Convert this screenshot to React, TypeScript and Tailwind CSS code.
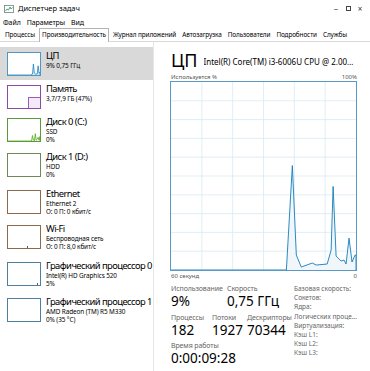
import React from "react"

type Item = {
  title: string
  lines: string[]
  h: string
  border: string
  selected?: boolean
  thumb?: React.ReactNode
}

const cpuThumb = (
  <svg viewBox="0 0 34 24" className="w-full h-full" preserveAspectRatio="none">
    <polyline
      points="0,24 24,24 26,23 27,12 28,22 29,23 31,23 32,14 33,22 34,21 34,24"
      fill="#dcecf6"
      stroke="#117dbb"
      strokeWidth="0.8"
    />
  </svg>
)

const memThumb = (
  <div className="w-full h-full flex flex-col justify-end items-end">
    <div className="w-[12px] h-[11px] border-l border-t border-[#9a5cb4] bg-[#f4eaf7]" />
  </div>
)

const diskThumb = (
  <svg viewBox="0 0 34 24" className="w-full h-full" preserveAspectRatio="none">
    <polyline
      points="0,24 25,24 26,18 27,23 28,24 29,16 30,23 31,22 32,20 33,23 34,19 34,24"
      fill="#eff7e8"
      stroke="#4da60c"
      strokeWidth="0.8"
    />
  </svg>
)

const tick = (
  <div className="w-full h-full flex items-end justify-center">
    <div className="w-[1px] h-[2px] bg-[#5c5c5c] ml-[6px]" />
  </div>
)

const tickRight = (
  <div className="w-full h-full flex items-end justify-end pr-[2px]">
    <div className="w-[1px] h-[2px] bg-[#5c5c5c]" />
  </div>
)

const items: Item[] = [
  { title: "ЦП", lines: ["9% 0,75 ГГц"], h: "h-[33px]", border: "border-[#4f97c2]", selected: true, thumb: cpuThumb },
  { title: "Память", lines: ["3,7/7,9 ГБ (47%)"], h: "h-[33px]", border: "border-[#8b4aa8]", thumb: memThumb },
  { title: "Диск 0 (C:)", lines: ["SSD", "0%"], h: "h-[35px]", border: "border-[#5a9a3a]", thumb: diskThumb },
  { title: "Диск 1 (D:)", lines: ["HDD", "0%"], h: "h-[37px]", border: "border-[#6f8a5a]" },
  { title: "Ethernet", lines: ["Ethernet 2", "О: 0 П: 0 кбит/с"], h: "h-[35px]", border: "border-[#8a6a4a]" },
  { title: "Wi-Fi", lines: ["Беспроводная сеть", "О: 0 П: 8,0 кбит/с"], h: "h-[37px]", border: "border-[#8a6a4a]", thumb: tick },
  { title: "Графический процессор 0", lines: ["Intel(R) HD Graphics 520", "5%"], h: "h-[36px]", border: "border-[#4f7f9f]", thumb: tickRight },
  { title: "Графический процессор 1", lines: ["AMD Radeon (TM) R5 M330", "0% (35 °C)"], h: "h-[36px]", border: "border-[#4f7f9f]" },
]

const tabs = [
  "Процессы",
  "Производительность",
  "Журнал приложений",
  "Автозагрузка",
  "Пользователи",
  "Подробности",
  "Службы",
]

const CpuGraph = () => {
  const cols = [1, 2, 3, 4, 5]
  const rows = [1, 2, 3, 4, 5, 6, 7, 8, 9]
  return (
    <svg viewBox="0 0 186 189" className="w-full h-full" preserveAspectRatio="none">
      {cols.map((c) => (
        <line key={"c" + c} x1={c * 31} y1="0" x2={c * 31} y2="189" stroke="#d9eaf4" strokeWidth="0.8" />
      ))}
      {rows.map((r) => (
        <line key={"r" + r} x1="0" y1={r * 18.9} x2="186" y2={r * 18.9} stroke="#d9eaf4" strokeWidth="0.8" />
      ))}
      <polyline
        points="0,189 116,189 122,84 126,174 131,186 142,182 146,184 157,183 161,169 163,105 166,175 171,180 174,179 176,183 179,157 182,181 185,174 186,174 186,189"
        fill="#f1f6fa"
        stroke="#117dbb"
        strokeWidth="0.9"
        strokeLinejoin="round"
      />
    </svg>
  )
}

const Stat = ({ label, value, w }: { label: string; value: string; w?: string }) => (
  <div className={`${w ?? ""} flex flex-col`}>
    <span className="text-[7px] leading-[9px] text-[#666] whitespace-nowrap tracking-[-0.1px]">{label}</span>
    <span className="text-[13.5px] leading-[17px] whitespace-nowrap">{value}</span>
  </div>
)

export default function App() {
  return (
    <div
      className="w-[370px] h-[371px] bg-white overflow-hidden flex flex-col text-black"
      style={{ fontFamily: '"Noto Sans", "DejaVu Sans", sans-serif' }}
    >
      {/* title bar */}
      <div className="h-[17px] flex items-center shrink-0">
        <svg viewBox="0 0 10 10" className="w-[10px] h-[10px] ml-[4px]">
          <rect x="0.5" y="1.5" width="9" height="7" fill="#fff" stroke="#6b7f8e" strokeWidth="0.8" />
          <polyline points="1.5,7 3,5 4.5,6 6,3 7,5 8.5,3.5" fill="none" stroke="#3aa34a" strokeWidth="0.9" />
        </svg>
        <span className="ml-[4px] text-[7.5px] leading-none">Диспетчер задач</span>
        <div className="ml-auto flex items-center text-[8px] text-[#333] leading-none">
          <span className="w-[12px] text-center">−</span>
          <span className="w-[12px] flex justify-center">
            <span className="w-[5px] h-[5px] border border-[#444]" />
          </span>
          <span className="w-[12px] text-center mr-[4px]">×</span>
        </div>
      </div>
      {/* menu */}
      <div className="h-[10px] flex items-center gap-[6px] pl-[3px] text-[7px] leading-none shrink-0 tracking-[-0.1px]">
        <span>Файл</span>
        <span>Параметры</span>
        <span>Вид</span>
      </div>
      {/* tabs */}
      <div className="h-[15px] flex items-end pl-[2px] border-b border-[#d9d9d9] shrink-0 text-[6.4px] leading-none tracking-[-0.1px] whitespace-nowrap">
        {tabs.map((t) => (
          <div
            key={t}
            className={
              t === "Производительность"
                ? "h-[14px] px-[2px] flex items-center border border-b-0 border-[#b4b4b4] bg-white -mb-[1px] mx-[1px]"
                : "h-[12px] px-[2px] flex items-center mx-[1px]"
            }
          >
            {t}
          </div>
        ))}
      </div>
      {/* body */}
      <div className="flex flex-1 min-h-0">
        {/* left list */}
        <div className="w-[154px] shrink-0 border-r border-[#e6e6e6] pt-[5px] flex flex-col">
          {items.map((it) => (
            <div
              key={it.title}
              className={`${it.h} flex items-start gap-[5px] pl-[7px] pt-[5px] ${it.selected ? "bg-[#d9d9d9]" : ""}`}
            >
              <div className={`w-[34px] h-[24px] shrink-0 border ${it.border} bg-white overflow-hidden`}>
                {it.thumb}
              </div>
              <div className="flex flex-col -mt-[2px] min-w-0">
                <span className="text-[9.4px] leading-[12px] whitespace-nowrap tracking-[-0.55px]">{it.title}</span>
                {it.lines.map((l) => (
                  <span key={l} className="text-[6.4px] leading-[8px] whitespace-nowrap tracking-[-0.1px]">
                    {l}
                  </span>
                ))}
              </div>
            </div>
          ))}
        </div>
        {/* right panel */}
        <div className="flex-1 min-w-0 pl-[17px] pr-[13px] pt-[8px] flex flex-col">
          <div className="flex items-end gap-[6px] h-[20px] min-w-0">
            <span className="text-[18px] leading-[20px] shrink-0">ЦП</span>
            <span className="text-[8px] leading-[12px] pb-[2px] whitespace-nowrap overflow-hidden text-ellipsis min-w-0">
              Intel(R) Core(TM) i3-6006U CPU @ 2.00GHz
            </span>
          </div>
          <div className="flex justify-between text-[6px] leading-[8px] text-[#555] mt-[3px]">
            <span>Используется %</span>
            <span>100%</span>
          </div>
          <div className="h-[190px] border border-[#5a99c3] -ml-[1px]">
            <CpuGraph />
          </div>
          <div className="flex justify-between text-[6px] leading-[8px] text-[#555] mt-[1px]">
            <span>60 секунд</span>
            <span>0</span>
          </div>
          <div className="flex mt-[4px]">
            <div className="w-[123px] flex flex-col">
              <div className="flex">
                <Stat label="Использование" value="9%" w="w-[56px]" />
                <Stat label="Скорость" value="0,75 ГГц" />
              </div>
              <div className="flex mt-[3px]">
                <Stat label="Процессы" value="182" w="w-[41px]" />
                <Stat label="Потоки" value="1927" w="w-[35px]" />
                <Stat label="Дескрипторы" value="70344" />
              </div>
              <div className="mt-[2px]">
                <Stat label="Время работы" value="0:00:09:28" />
              </div>
            </div>
            <div className="flex-1 min-w-0 flex flex-col text-[6.5px] leading-[9.2px] text-[#666] whitespace-nowrap">
              <span>Базовая скорость:</span>
              <span>Сокетов:</span>
              <span>Ядра:</span>
              <span className="overflow-hidden text-ellipsis">Логических процессоров:</span>
              <span>Виртуализация:</span>
              <span>Кэш L1:</span>
              <span>Кэш L2:</span>
              <span>Кэш L3:</span>
            </div>
          </div>
        </div>
      </div>
    </div>
  )
}
